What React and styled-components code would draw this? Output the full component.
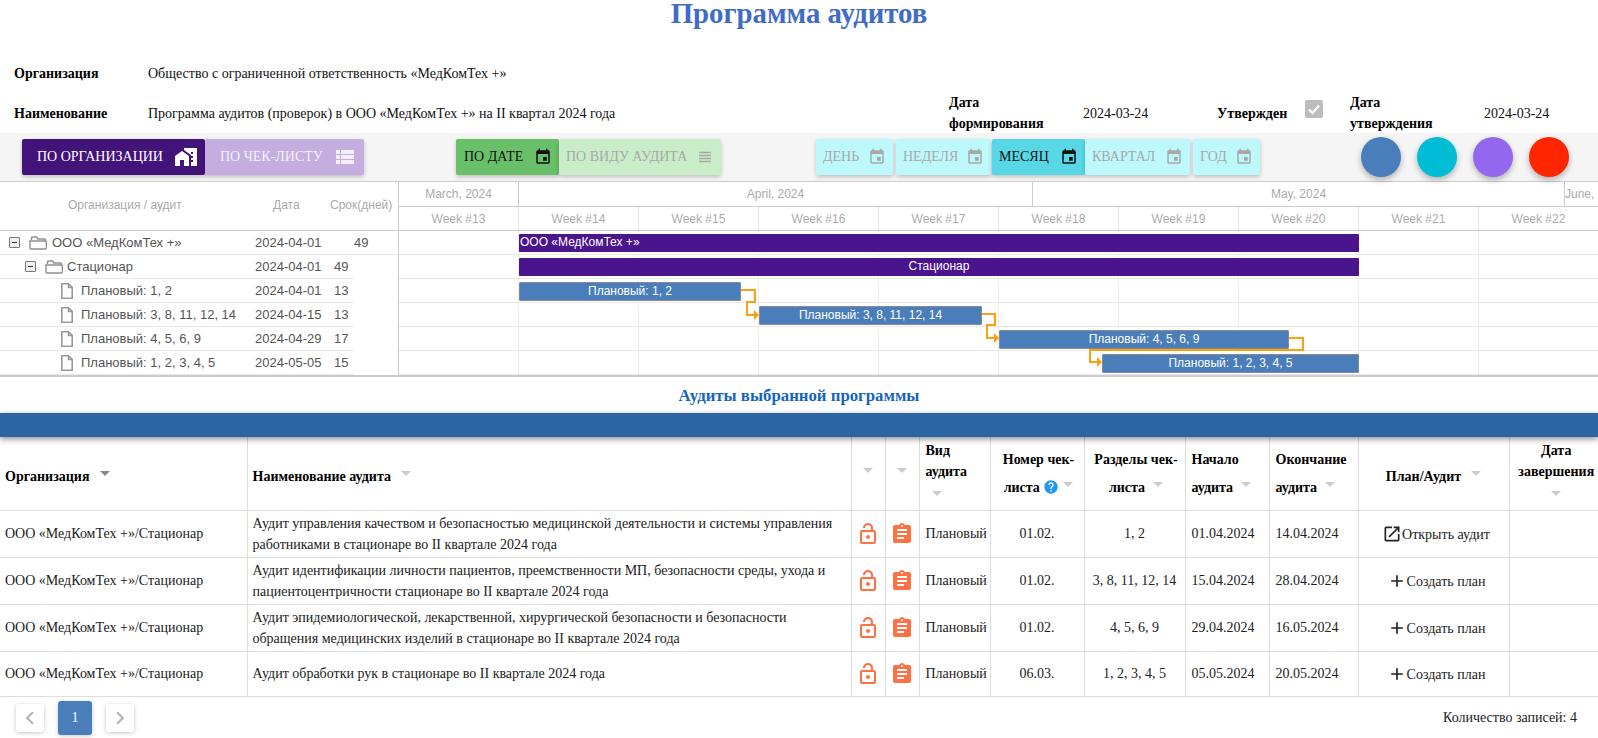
import React from 'react';
import styled, { createGlobalStyle } from 'styled-components';
import {
  MdAdd, MdAssignment, MdChevronLeft, MdChevronRight, MdEvent, MdHelp, MdHomeWork,
  MdOpenInNew, MdOutlineLockOpen, MdViewHeadline, MdViewList,
} from 'react-icons/md';

const GlobalStyle = createGlobalStyle`
  html, body {
    margin: 0;
    height: 738px;
    overflow: hidden;
    background: #fff;
    font-family: "Liberation Serif", serif;
    font-size: 14px;
    color: #212121;
  }
`;

const Page = styled.div`
  width: 1598px;
  height: 738px;
  overflow: hidden;
`;

const Title = styled.h1`
  margin: 0 0 33px;
  height: 30px;
  font-size: 28.8px;
  line-height: 27px;
  font-weight: bold;
  text-align: center;
  color: #3f6cc6;
`;

const InfoRow = styled.div`
  display: grid;
  grid-template-columns: ${({ $cols }) => $cols};
  align-items: center;
  padding-left: 14px;
  height: ${({ $h }) => $h}px;
  margin-bottom: ${({ $mb }) => $mb || 0}px;
  line-height: 21px;
`;

const Label = styled.div`
  font-weight: bold;
  color: #000;
  max-width: ${({ $narrow }) => ($narrow ? '100px' : 'none')};
`;

const Value = styled.div`
  color: #111;
`;

const Checkbox = styled.div`
  width: 18px;
  height: 18px;
  border-radius: 2px;
  background: #bdbdbd;
  display: flex;
  align-items: center;
  justify-content: center;
  margin-top: -9px;
`;

const Toolbar = styled.div`
  height: 48px;
  box-sizing: border-box;
  background: #f5f5f5;
  padding: 6px 0 0 22px;
  display: flex;
  align-items: flex-start;
`;

const ButtonGroup = styled.div`
  display: flex;
  margin-left: ${({ $ml }) => $ml}px;
`;

const colors = {
  purple: { on: '#421378', off: '#c4aee0', onText: '#fff', offText: '#f3eef9' },
  green: { on: '#6abf69', off: '#c8edc8', onText: '#111', offText: '#a8a8a8' },
  cyan: { on: '#58d8e6', off: '#bdf8fc', onText: '#111', offText: '#a8a8a8' },
};

const ToggleButton = styled.div`
  width: ${({ $w }) => $w}px;
  margin-right: ${({ $mr }) => $mr || 0}px;
  height: 36px;
  box-sizing: border-box;
  padding: 0 7px 0 ${({ $pl }) => $pl || 7}px;
  display: flex;
  align-items: center;
  justify-content: space-between;
  white-space: nowrap;
  text-transform: uppercase;
  font-size: 14px;
  background: ${({ $tone, $on }) => ($on ? colors[$tone].on : colors[$tone].off)};
  color: ${({ $tone, $on }) => ($on ? colors[$tone].onText : colors[$tone].offText)};
  box-shadow: 0 2px 4px rgba(0, 0, 0, 0.22);
  border-radius: 2px;
`;

const Swatches = styled.div`
  display: flex;
  gap: 16px;
  margin-left: 101px;
  margin-top: -2px;
`;

const Swatch = styled.div`
  width: 40px;
  height: 40px;
  border-radius: 50%;
  background: ${({ $color }) => $color};
  box-shadow: 0 3px 6px rgba(0, 0, 0, 0.28);
`;

const Gantt = styled.div`
  display: flex;
  height: 196px;
  box-sizing: border-box;
  border-top: 1px solid #ccc;
  border-bottom: 2px solid #ccc;
  overflow: hidden;
`;

const TreePanel = styled.div`
  flex: 0 0 398px;
  border-right: 1px solid #ccc;
  font-family: "Liberation Sans", sans-serif;
  font-size: 13px;
  color: #555;
`;

const TreeHead = styled.div`
  height: 49px;
  box-sizing: border-box;
  border-bottom: 1px solid #ccc;
  display: grid;
  grid-template-columns: 273px 57px 1fr;
  align-items: center;
  font-size: 12px;
  color: #aaa;
  padding-bottom: 2px;
`;

const TreeHeadName = styled.span`
  padding-left: 68px;
`;

const TreeRow = styled.div`
  height: 24px;
  box-sizing: border-box;
  width: ${({ $wide }) => ($wide ? '398px' : '354px')};
  border-bottom: 1px solid #e8e8e8;
  display: flex;
  align-items: center;
  padding-left: ${({ $indent }) => $indent}px;
  padding-right: ${({ $wide }) => ($wide ? 24 : 0)}px;
  white-space: nowrap;
`;

const TreeName = styled.span`
  flex: 1;
  margin-left: ${({ $gap }) => $gap}px;
`;

const TreeDate = styled.span`
  width: 79px;
  flex: none;
`;

const TreeDays = styled.span`
  width: 20px;
  flex: none;
  margin-left: ${({ $shift }) => $shift || 0}px;
`;

const Expander = styled.span`
  width: 9px;
  height: 9px;
  border: 1px solid #777;
  border-radius: 1px;
  background: #f0f0f0;
  display: flex;
  align-items: center;
  justify-content: center;
  margin-right: 9px;
  flex: none;

  &::before {
    content: '';
    width: 5px;
    height: 1px;
    background: #333;
  }
`;

const Timeline = styled.div`
  flex: 1;
  min-width: 0;
  font-family: "Liberation Sans", sans-serif;
  font-size: 12px;
  color: #aaa;
`;

const ScaleRow = styled.div`
  display: flex;
  height: ${({ $h }) => $h}px;
  box-sizing: border-box;
  border-bottom: 1px solid #ccc;
`;

const ScaleCell = styled.div`
  flex: 0 0 ${({ $w }) => $w}px;
  box-sizing: border-box;
  border-right: 1px solid ${({ $soft }) => ($soft ? '#e4e4e4' : '#ccc')};
  display: flex;
  align-items: center;
  justify-content: ${({ $left }) => ($left ? 'flex-start' : 'center')};
  white-space: nowrap;
  overflow: hidden;
`;

const ChartBody = styled.div`
  position: relative;
`;

const ChartRow = styled.div`
  position: relative;
  display: flex;
  height: 24px;
  box-sizing: border-box;
  border-bottom: 1px solid #e8e8e8;
`;

const GridCell = styled.div`
  flex: 0 0 120px;
  box-sizing: border-box;
  border-right: 1px solid #eee;
`;

const Bar = styled.div`
  position: absolute;
  top: 3px;
  left: ${({ $left }) => $left}px;
  width: ${({ $width }) => $width}px;
  height: ${({ $group }) => ($group ? 18 : 19)}px;
  box-sizing: border-box;
  background: ${({ $group }) => ($group ? '#4a148c' : '#4a7ebb')};
  border: ${({ $group }) => ($group ? 'none' : '1px solid #8a8a8a')};
  border-radius: 1px;
  color: #fff;
  font-size: 12px;
  line-height: ${({ $group }) => ($group ? 17 : 16)}px;
  text-align: ${({ $start }) => ($start ? 'left' : 'center')};
  padding-left: ${({ $start }) => ($start ? 1 : 0)}px;
  white-space: nowrap;
`;

const Links = styled.svg`
  position: absolute;
  left: 0;
  top: 0;
  width: 1200px;
  height: 144px;
  pointer-events: none;
`;

const SectionTitle = styled.div`
  height: 36px;
  line-height: 37px;
  text-align: center;
  font-size: 16.8px;
  font-weight: bold;
  color: #1565c0;
`;

const TableBar = styled.div`
  height: 24px;
  background: #2c65a3;
  box-shadow: 0 2px 6px rgba(0, 0, 0, 0.45);
  position: relative;
`;

const Table = styled.table`
  width: 1598px;
  table-layout: fixed;
  border-collapse: collapse;
  color: #212121;
`;

const Th = styled.th`
  height: 73px;
  box-sizing: border-box;
  padding: 0 ${({ $pr }) => $pr ?? 5}px 0 ${({ $pl }) => $pl ?? 5}px;
  border: 1px solid #ddd;
  border-top: none;
  font-size: 14px;
  line-height: 21px;
  font-weight: bold;
  color: #000;
  text-align: ${({ $align }) => $align || 'left'};

  &:first-child { border-left: none; }
  &:last-child { border-right: none; }
`;

const Td = styled.td`
  box-sizing: border-box;
  height: 45px;
  padding: 2px ${({ $pr }) => $pr ?? 5}px 2px ${({ $pl }) => $pl ?? 5}px;
  border: 1px solid #ddd;
  line-height: 21px;
  text-align: ${({ $align }) => $align || 'left'};
  white-space: ${({ $nowrap }) => ($nowrap ? 'nowrap' : 'normal')};

  &:first-child { border-left: none; }
  &:last-child { border-right: none; }
`;

const SortArrow = styled.span`
  display: inline-block;
  width: 0;
  height: 0;
  margin: ${({ $lift }) => $lift ?? 12}px 0 0 ${({ $ml }) => $ml ?? 8}px;
  vertical-align: 5px;
  border-left: 5px solid transparent;
  border-right: 5px solid transparent;
  border-top: 5px solid ${({ $dark }) => ($dark ? '#888' : '#ccc')};
`;

const CellIcon = styled.span`
  display: flex;
  justify-content: center;
  align-items: center;
  color: #ff7043;
`;

const PlanAction = styled.span`
  display: inline-flex;
  align-items: center;
  white-space: nowrap;
  vertical-align: middle;
`;

const Footer = styled.div`
  height: 42px;
  display: flex;
  align-items: center;
  justify-content: space-between;
  padding: 0 21px 0 16px;
`;

const Pager = styled.div`
  display: flex;
  align-items: center;
  gap: 14px;
`;

const PageButton = styled.div`
  width: ${({ $active }) => ($active ? 34 : 28)}px;
  height: ${({ $active }) => ($active ? 34 : 28)}px;
  border-radius: 3px;
  display: flex;
  align-items: center;
  justify-content: center;
  background: ${({ $active }) => ($active ? '#4a7ebb' : '#fff')};
  color: ${({ $active }) => ($active ? '#fff' : '#b5b5b5')};
  box-shadow: 0 1px 4px rgba(0, 0, 0, 0.22);
`;

const weeks = [13, 14, 15, 16, 17, 18, 19, 20, 21, 22];

const FolderIcon = () => (
  <svg width="18" height="14" viewBox="0 0 18 14" fill="none" stroke="#8f8f8f" strokeWidth="1.4" style={{ flex: 'none' }}>
    <path d="M2.5 4V2.2C2.5 1.5 3 1 3.7 1H7.5L9 3H15.5C16.2 3 16.6 3.4 16.6 4.1V5" />
    <path d="M1 5H16.8C17.2 5 17.5 5.3 17.4 5.7V11.8C17.4 12.5 16.9 13 16.2 13H2.2C1.5 13 1 12.5 1 11.8V5Z" />
  </svg>
);

const FileIcon = () => (
  <svg width="12" height="16" viewBox="0 0 12 16" fill="none" stroke="#999" strokeWidth="1.6" style={{ flex: 'none' }}>
    <path d="M0.8 0.8H7.5L11.2 4.5V15.2H0.8V0.8Z" />
    <path d="M7.5 0.8V4.5H11.2" />
  </svg>
);

const ToggleIcon = ({ kind, size = 18 }) => {
  const Icon = kind;
  return <Icon size={size} style={{ flex: 'none' }} />;
};

const tasks = [
  { name: 'Плановый: 1, 2', date: '2024-04-01', days: 13 },
  { name: 'Плановый: 3, 8, 11, 12, 14', date: '2024-04-15', days: 13 },
  { name: 'Плановый: 4, 5, 6, 9', date: '2024-04-29', days: 17 },
  { name: 'Плановый: 1, 2, 3, 4, 5', date: '2024-05-05', days: 15 },
];

const bars = [
  { text: 'ООО «МедКомТех +»', left: 120, width: 840, group: true, start: true },
  { text: 'Стационар', left: 120, width: 840, group: true },
  { text: 'Плановый: 1, 2', left: 120, width: 222 },
  { text: 'Плановый: 3, 8, 11, 12, 14', left: 360, width: 223 },
  { text: 'Плановый: 4, 5, 6, 9', left: 600, width: 290 },
  { text: 'Плановый: 1, 2, 3, 4, 5', left: 703, width: 257 },
];

const audits = [
  { title: 'Аудит управления качеством и безопасностью медицинской деятельности и системы управления работниками в стационаре во II квартале 2024 года', num: '01.02.', parts: '1, 2', from: '01.04.2024', to: '14.04.2024', open: true },
  { title: 'Аудит идентификации личности пациентов, преемственности МП, безопасности среды, ухода и пациентоцентричности стационаре во II квартале 2024 года', num: '01.02.', parts: '3, 8, 11, 12, 14', from: '15.04.2024', to: '28.04.2024' },
  { title: 'Аудит эпидемиологической, лекарственной, хирургической безопасности и безопасности обращения медицинских изделий в стационаре во II квартале 2024 года', num: '01.02.', parts: '4, 5, 6, 9', from: '29.04.2024', to: '16.05.2024' },
  { title: 'Аудит обработки рук в стационаре во II квартале 2024 года', num: '06.03.', parts: '1, 2, 3, 4, 5', from: '05.05.2024', to: '20.05.2024' },
];

const colWidths = [247, 604, 34, 34, 71, 94, 101, 84, 89, 151, 89];

const App = () => {
  return (
    <Page>
      <GlobalStyle />
      <Title>Программа аудитов</Title>

      <InfoRow $cols="134px 1fr" $h={21} $mb={8}>
        <Label>Организация</Label>
        <Value>Общество с ограниченной ответственность «МедКомТех +»</Value>
      </InfoRow>
      <InfoRow $cols="134px 801px 134px 134px 88px 45px 134px 1fr" $h={41}>
        <Label>Наименование</Label>
        <Value>Программа аудитов (проверок) в ООО «МедКомТех +» на II квартал 2024 года</Value>
        <Label $narrow>Дата формирования</Label>
        <Value>2024-03-24</Value>
        <Label>Утвержден</Label>
        <Checkbox>
          <svg width="14" height="14" viewBox="0 0 14 14" fill="none" stroke="#fff" strokeWidth="2">
            <path d="M2 7.5L5.5 11L12 3.5" />
          </svg>
        </Checkbox>
        <Label $narrow>Дата утверждения</Label>
        <Value>2024-03-24</Value>
      </InfoRow>

      <Toolbar>
        <ButtonGroup $ml={0}>
          <ToggleButton $tone="purple" $on $w={183} $pl={15}>По организации<ToggleIcon kind={MdHomeWork} size={24} /></ToggleButton>
          <ToggleButton $tone="purple" $w={159} $pl={15}>По чек-листу<ToggleIcon kind={MdViewList} size={24} /></ToggleButton>
        </ButtonGroup>
        <ButtonGroup $ml={92}>
          <ToggleButton $tone="green" $on $w={103} $pl={8}>По дате<ToggleIcon kind={MdEvent} /></ToggleButton>
          <ToggleButton $tone="green" $w={162}>По виду аудита<ToggleIcon kind={MdViewHeadline} /></ToggleButton>
        </ButtonGroup>
        <ButtonGroup $ml={95}>
          <ToggleButton $tone="cyan" $w={77} $mr={3}>День<ToggleIcon kind={MdEvent} /></ToggleButton>
          <ToggleButton $tone="cyan" $w={95} $mr={1}>Неделя<ToggleIcon kind={MdEvent} /></ToggleButton>
          <ToggleButton $tone="cyan" $on $w={93}>Месяц<ToggleIcon kind={MdEvent} /></ToggleButton>
          <ToggleButton $tone="cyan" $w={105} $mr={3}>Квартал<ToggleIcon kind={MdEvent} /></ToggleButton>
          <ToggleButton $tone="cyan" $w={67}>Год<ToggleIcon kind={MdEvent} /></ToggleButton>
        </ButtonGroup>
        <Swatches>
          <Swatch $color="#4a7ebb" />
          <Swatch $color="#00bcd4" />
          <Swatch $color="#9368ee" />
          <Swatch $color="#ff2600" />
        </Swatches>
      </Toolbar>

      <Gantt>
        <TreePanel>
          <TreeHead>
            <TreeHeadName>Организация / аудит</TreeHeadName>
            <span>Дата</span>
            <span>Срок(дней)</span>
          </TreeHead>
          <TreeRow $indent={9} $wide>
            <Expander />
            <FolderIcon />
            <TreeName $gap={5}>ООО «МедКомТех +»</TreeName>
            <TreeDate>2024-04-01</TreeDate>
            <TreeDays $shift={20}>49</TreeDays>
          </TreeRow>
          <TreeRow $indent={25}>
            <Expander />
            <FolderIcon />
            <TreeName $gap={4}>Стационар</TreeName>
            <TreeDate>2024-04-01</TreeDate>
            <TreeDays>49</TreeDays>
          </TreeRow>
          {tasks.map((t) => (
            <TreeRow $indent={61} key={t.name}>
              <FileIcon />
              <TreeName $gap={8}>{t.name}</TreeName>
              <TreeDate>{t.date}</TreeDate>
              <TreeDays>{t.days}</TreeDays>
            </TreeRow>
          ))}
        </TreePanel>

        <Timeline>
          <ScaleRow $h={25}>
            <ScaleCell $w={120}>March, 2024</ScaleCell>
            <ScaleCell $w={514}>April, 2024</ScaleCell>
            <ScaleCell $w={532}>May, 2024</ScaleCell>
            <ScaleCell $w={34} $left>June, 2024</ScaleCell>
          </ScaleRow>
          <ScaleRow $h={24}>
            {weeks.map((w) => (
              <ScaleCell $soft $w={120} key={w}>Week #{w}</ScaleCell>
            ))}
          </ScaleRow>
          <ChartBody>
            {bars.map((b) => (
              <ChartRow key={b.text}>
                {weeks.map((w) => <GridCell key={w} />)}
                <Bar $left={b.left} $width={b.width} $group={b.group} $start={b.start}>{b.text}</Bar>
              </ChartRow>
            ))}
            <Links viewBox="0 0 1200 144" fill="none">
              <g stroke="#ff9e0f" strokeWidth="2">
                <path d="M342 59H356V71H348V84H357" />
                <path d="M583 83H596V94H588V107H597" />
                <path d="M890 107H904V119H691V131H700" />
              </g>
              <g fill="#ff9e0f">
                <path d="M355 79L360 84L355 89Z" />
                <path d="M595 102L600 107L595 112Z" />
                <path d="M698 126L703 131L698 136Z" />
              </g>
            </Links>
          </ChartBody>
        </Timeline>
      </Gantt>

      <SectionTitle>Аудиты выбранной программы</SectionTitle>
      <TableBar />

      <Table>
        <colgroup>
          {colWidths.map((w, i) => <col key={i} style={{ width: w }} />)}
        </colgroup>
        <thead>
          <tr>
            <Th>Организация<SortArrow $dark $ml={10} /></Th>
            <Th>Наименование аудита<SortArrow $ml={10} /></Th>
            <Th $align="center"><SortArrow $ml={0} $lift={0} /></Th>
            <Th $align="center"><SortArrow $ml={0} $lift={0} /></Th>
            <Th $pl={6}>Вид аудита<br /><SortArrow $ml={6} $lift={9} /></Th>
            <Th $align="center" $pr={2}>Номер чек-листа <MdHelp size={16} color="#2196f3" style={{ verticalAlign: -3 }} /><SortArrow $ml={4} /></Th>
            <Th $align="center" $pr={2}>Разделы чек-листа<SortArrow /></Th>
            <Th $pl={6}>Начало аудита<SortArrow /></Th>
            <Th $pl={6} $pr={2}>Окончание аудита<SortArrow /></Th>
            <Th $align="center">План/Аудит<SortArrow $ml={10} /></Th>
            <Th $align="center" $pr={0}>Дата завершения<br /><SortArrow $ml={0} $lift={9} /></Th>
          </tr>
        </thead>
        <tbody>
          {audits.map((a) => (
            <tr key={a.title}>
              <Td $nowrap>ООО «МедКомТех +»/Стационар</Td>
              <Td>{a.title}</Td>
              <Td $pl={0} $pr={0}><CellIcon><MdOutlineLockOpen size={24} /></CellIcon></Td>
              <Td $pl={0} $pr={0}><CellIcon><MdAssignment size={24} /></CellIcon></Td>
              <Td $pl={6} $pr={0} $nowrap>Плановый</Td>
              <Td $align="center">{a.num}</Td>
              <Td $align="center" $pl={0} $pr={0} $nowrap>{a.parts}</Td>
              <Td $pl={6} $nowrap>{a.from}</Td>
              <Td $pl={6} $nowrap>{a.to}</Td>
              <Td $align="center" $pl={10}>
                {a.open
                  ? <PlanAction><MdOpenInNew size={20} />Открыть аудит</PlanAction>
                  : <PlanAction><MdAdd size={20} />Создать план</PlanAction>}
              </Td>
              <Td />
            </tr>
          ))}
        </tbody>
      </Table>

      <Footer>
        <Pager>
          <PageButton><MdChevronLeft size={26} /></PageButton>
          <PageButton $active>1</PageButton>
          <PageButton><MdChevronRight size={26} /></PageButton>
        </Pager>
        <span>Количество записей: 4</span>
      </Footer>
    </Page>
  );
};

export default App;
